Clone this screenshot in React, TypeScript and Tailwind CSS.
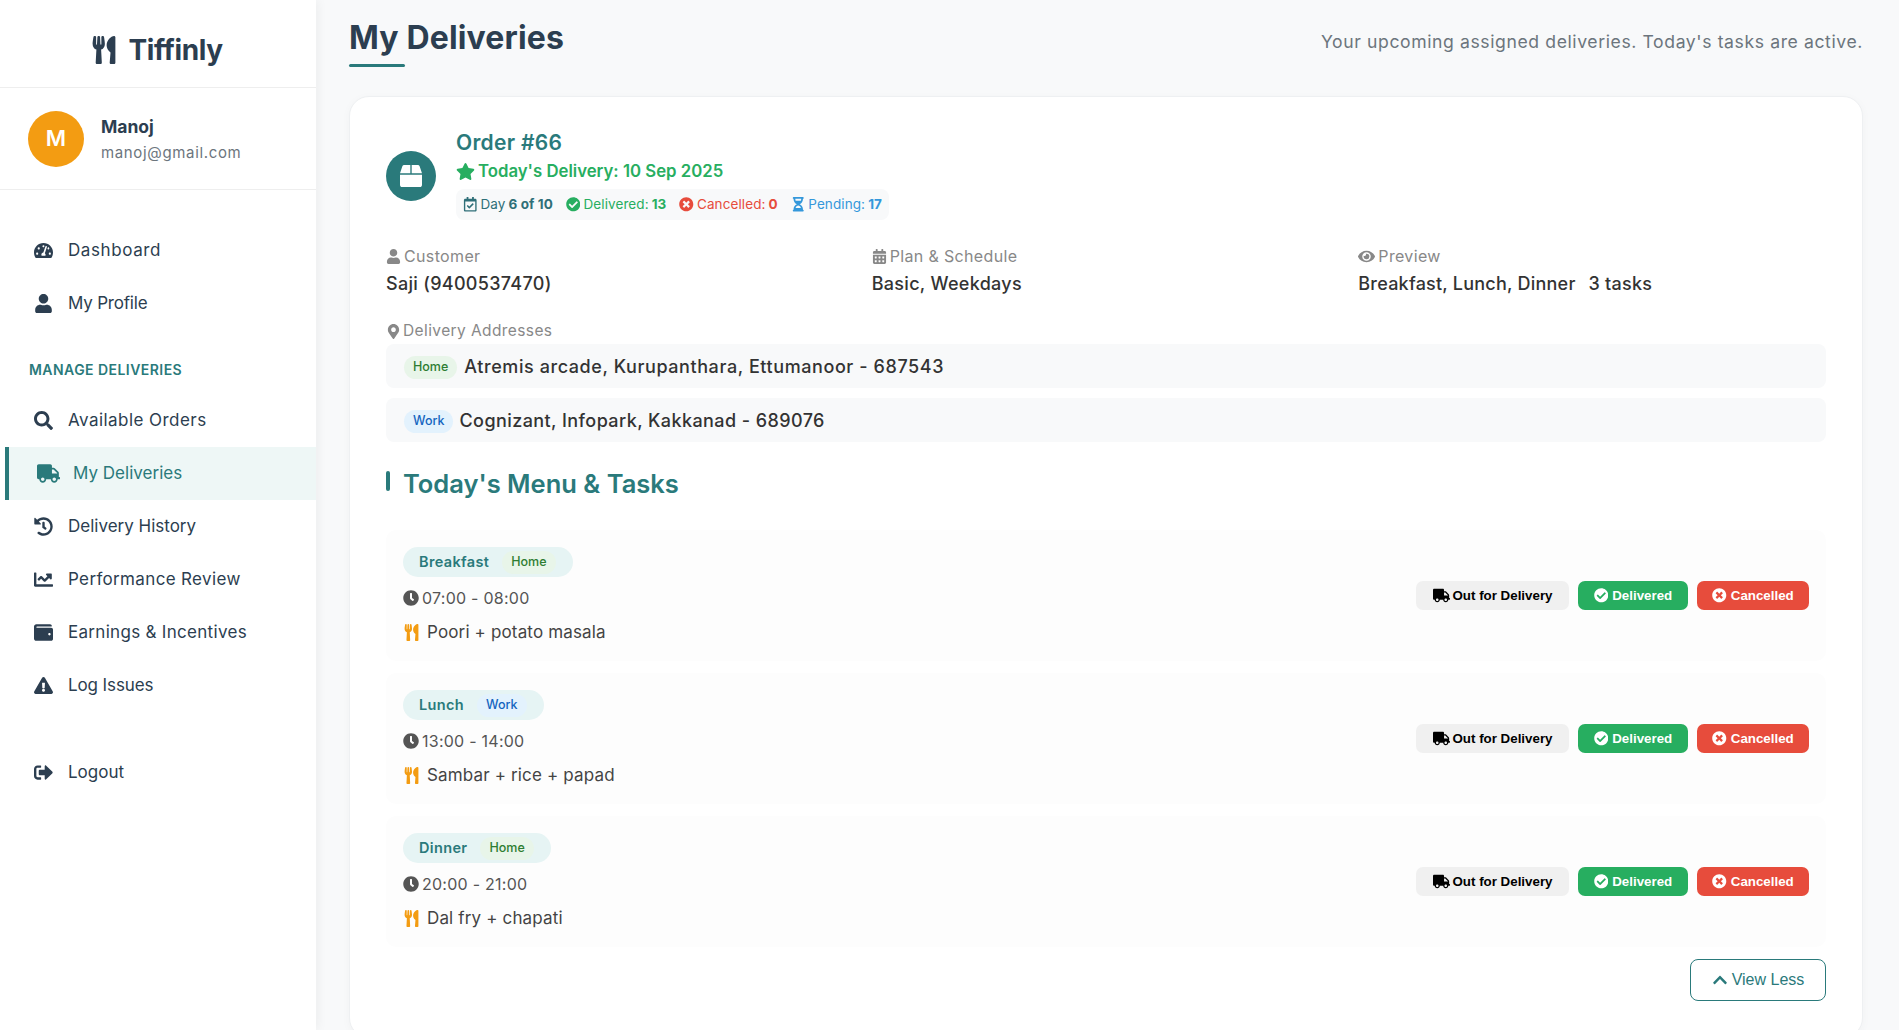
import {
  FaBox,
  FaCalendarAlt,
  FaChartLine,
  FaCheckCircle,
  FaChevronUp,
  FaClock,
  FaExclamationTriangle,
  FaEye,
  FaHistory,
  FaHourglassHalf,
  FaMapMarkerAlt,
  FaRegCalendarCheck,
  FaSearch,
  FaSignOutAlt,
  FaStar,
  FaTachometerAlt,
  FaTimesCircle,
  FaTruck,
  FaUser,
  FaUtensils,
  FaWallet,
} from 'react-icons/fa';

function NavItem({ icon, label, spacing = 'tracking-[0.35px]' }: { icon: React.ReactNode; label: string; spacing?: string }) {
  return (
    <a className="flex h-[53px] items-center gap-[15px] pl-[33px] text-[#2c3e50]">
      <span className="flex w-[20px] justify-center text-[19px]">{icon}</span>
      <span className={`text-[17px] ${spacing}`}>{label}</span>
    </a>
  );
}

function Tag({ kind }: { kind: 'Home' | 'Work' }) {
  const cls = kind === 'Home' ? 'bg-[#e8f5e9] text-[#2e7d32]' : 'bg-[#e3f2fd] text-[#1565c0]';
  return <span className={`inline-flex h-[23px] items-center rounded-full px-[9px] text-[12.5px] font-medium ${cls}`}>{kind}</span>;
}

function Task({ meal, kind, time, menu }: { meal: string; kind: 'Home' | 'Work'; time: string; menu: string }) {
  return (
    <div className="flex h-[131px] items-center justify-between rounded-[10px] bg-[#fdfdfd] pl-[17px] pr-[17px]">
      <div>
        <div className="inline-flex h-[30px] items-center gap-[13px] rounded-[15px] bg-[#e6f4f4] pl-[16px] pr-[17px]">
          <span className="text-[14.5px] font-semibold tracking-[0.35px] text-[#2a7a7b]">{meal}</span>
          <Tag kind={kind} />
        </div>
        <div className="mt-[10px] flex items-center gap-[3px] text-[16px] leading-[22px] tracking-[0.25px] text-[#555]">
          <FaClock className="text-[16px] text-[#555]" />
          {time}
        </div>
        <div className="mt-[11px] flex items-center gap-[7px] text-[17px] leading-[24px] tracking-[0.15px] text-[#444]">
          <FaUtensils className="text-[17px] text-[#f39c12]" />
          {menu}
        </div>
      </div>
      <div className="flex items-center gap-[9px] font-['Liberation_Sans',sans-serif] text-[13.33px] font-bold">
        <button className="flex h-[29px] w-[153px] items-center justify-center gap-[3px] rounded-[7px] bg-[#f0f0f0] text-black">
          <FaTruck className="text-[17px]" />
          Out for Delivery
        </button>
        <button className="flex h-[29px] w-[110px] items-center justify-center gap-[4px] rounded-[7px] bg-[#27ae60] text-white">
          <FaCheckCircle className="text-[14.5px]" />
          Delivered
        </button>
        <button className="flex h-[29px] w-[112px] items-center justify-center gap-[4px] rounded-[7px] bg-[#e74c3c] text-white">
          <FaTimesCircle className="text-[14.5px]" />
          Cancelled
        </button>
      </div>
    </div>
  );
}

export default function App() {
  return (
    <div className="flex h-screen overflow-hidden bg-[#f8f9fa] font-[Inter,sans-serif]">
      {/* Sidebar */}
      <aside className="w-[316px] shrink-0 bg-white shadow-[2px_0_10px_rgba(0,0,0,0.05)]">
        <div className="flex h-[88px] items-center justify-center gap-[10px] border-b border-[#eeeeee] pr-[3px] pt-[12px] text-[#2c3e50]">
          <FaUtensils className="text-[28px]" />
          <span className="text-[28px] font-bold tracking-[-0.4px]">Tiffinly</span>
        </div>
        <div className="flex h-[102px] items-center gap-[17px] border-b border-[#eeeeee] pl-[28px]">
          <div className="flex h-[56px] w-[56px] items-center justify-center rounded-full bg-[#f39c12] text-[22px] font-semibold text-white">M</div>
          <div className="pt-[2px]">
            <div className="text-[17.5px] font-bold leading-[26px] text-[#2c3e50]">Manoj</div>
            <div className="pt-[1px] text-[15px] leading-[24px] tracking-[0.65px] text-[#6c757d]">manoj@gmail.com</div>
          </div>
        </div>
        <nav className="pt-[34px]">
          <NavItem icon={<FaTachometerAlt />} label="Dashboard" spacing="tracking-[0.6px]" />
          <NavItem icon={<FaUser />} label="My Profile" spacing="tracking-[-0.2px]" />
          <div className="h-[64px] pl-[29px] pt-[30px] text-[14px] font-semibold uppercase leading-[20px] tracking-[0.45px] text-[#2a7a7b]">Manage Deliveries</div>
          <NavItem icon={<FaSearch />} label="Available Orders" spacing="tracking-[0.45px]" />
          <a className="ml-[5px] flex h-[53px] items-center gap-[13px] border-l-[4px] border-[#2a7a7b] bg-[#eef7f6] pl-[28px] text-[#2a7a7b]">
            <FaTruck className="text-[23px]" />
            <span className="text-[17px] tracking-[0.02px]">My Deliveries</span>
          </a>
          <NavItem icon={<FaHistory />} label="Delivery History" spacing="tracking-[0px]" />
          <NavItem icon={<FaChartLine />} label="Performance Review" />
          <NavItem icon={<FaWallet />} label="Earnings & Incentives" spacing="tracking-[0.3px]" />
          <NavItem icon={<FaExclamationTriangle />} label="Log Issues" spacing="tracking-[-0.1px]" />
          <div className="h-[34px]" />
          <NavItem icon={<FaSignOutAlt />} label="Logout" spacing="tracking-[0px]" />
        </nav>
      </aside>

      {/* Main */}
      <main className="min-w-0 flex-1 pl-[33px] pr-[36px]">
        <header className="flex h-[96px] items-start justify-between">
          <div className="pt-[18px]">
            <h1 className="text-[32px] font-bold leading-[40px] tracking-[0.15px] text-[#2c3e50]">My Deliveries</h1>
            <div className="mt-[6px] h-[3px] w-[56px] rounded-full bg-[#2a7a7b]" />
          </div>
          <p className="pt-[30px] text-[17.6px] leading-[24px] tracking-[0.6px] text-[#6c757d]">Your upcoming assigned deliveries. Today's tasks are active.</p>
        </header>

        <section className="rounded-[20px] border border-[#eef0f2] bg-white px-[36px] pb-[36px] pt-[34px] shadow-[0_2px_10px_rgba(0,0,0,0.03)]">
          {/* Order header */}
          <div className="flex items-center gap-[20px]">
            <div className="flex h-[50px] w-[50px] items-center justify-center rounded-full bg-[#2a7a7b] text-[22px] text-white">
              <FaBox />
            </div>
            <div>
              <div className="text-[21px] font-semibold leading-[24px] tracking-[0.3px] text-[#2a7a7b]">Order #66</div>
              <div className="mt-[4px] flex items-center gap-[3px] text-[16.75px] font-semibold leading-[24px] text-[#27ae60]">
                <FaStar className="text-[19px]" />
                Today's Delivery: 10 Sep 2025
              </div>
              <div className="mt-[6px] flex h-[31px] items-center gap-[13px] rounded-[8px] bg-[#f8f9fa] px-[7px] text-[13.5px] tracking-[0.1px]">
                <span className="flex items-center gap-[3px] text-[#2f6f78]">
                  <FaRegCalendarCheck className="text-[14.5px]" /> Day <b className="font-bold">6 of 10</b>
                </span>
                <span className="flex items-center gap-[3px] text-[#27ae60]">
                  <FaCheckCircle className="text-[14.5px]" /> Delivered: <b className="font-bold">13</b>
                </span>
                <span className="flex items-center gap-[3px] text-[#e74c3c]">
                  <FaTimesCircle className="text-[14.5px]" /> Cancelled: <b className="font-bold">0</b>
                </span>
                <span className="flex items-center gap-[3px] text-[#3498db]">
                  <FaHourglassHalf className="text-[14.5px]" /> Pending: <b className="font-bold">17</b>
                </span>
              </div>
            </div>
          </div>

          {/* Details */}
          <div className="mt-[25px] grid grid-cols-3 gap-x-[17px]">
            <div>
              <div className="flex items-center gap-[3px] text-[16px] leading-[22px] tracking-[0.35px] text-[#888]"><FaUser className="text-[15px]" /> Customer</div>
              <div className="mt-[4px] text-[18px] font-medium leading-[26px] tracking-[0.3px] text-[#333]">Saji (9400537470)</div>
            </div>
            <div>
              <div className="flex items-center gap-[3px] text-[16px] leading-[22px] tracking-[0.35px] text-[#888]"><FaCalendarAlt className="text-[15px]" /> Plan &amp; Schedule</div>
              <div className="mt-[4px] text-[18px] font-medium leading-[26px] tracking-[0.3px] text-[#333]">Basic, Weekdays</div>
            </div>
            <div className="pl-[1px]">
              <div className="flex items-center gap-[3px] text-[16px] leading-[22px] tracking-[0.35px] text-[#888]"><FaEye className="text-[17px]" /> Preview</div>
              <div className="mt-[4px] flex gap-[13px] text-[18px] font-medium leading-[26px] tracking-[0.22px] text-[#333]">
                <span>Breakfast, Lunch, Dinner</span>
                <span>3 tasks</span>
              </div>
            </div>
          </div>

          {/* Addresses */}
          <div className="mt-[24px] flex items-center gap-[2px] text-[15.5px] leading-[20px] tracking-[0.4px] text-[#888]"><FaMapMarkerAlt className="text-[15px]" /> Delivery Addresses</div>
          <div className="mt-[3px] flex flex-col gap-[10px]">
            <div className="flex h-[44px] items-center gap-[7px] rounded-[8px] bg-[#f8f9fa] pl-[18px] text-[18px] font-medium tracking-[0.58px] text-[#333]">
              <span className="mt-[3px] flex tracking-normal"><Tag kind="Home" /></span>
              Atremis arcade, Kurupanthara, Ettumanoor - 687543
            </div>
            <div className="flex h-[44px] items-center gap-[6px] rounded-[8px] bg-[#f8f9fa] pl-[18px] text-[18px] font-medium tracking-[0.42px] text-[#333]">
              <span className="mt-[3px] flex tracking-normal"><Tag kind="Work" /></span>
              Cognizant, Infopark, Kakkanad - 689076
            </div>
          </div>

          {/* Tasks */}
          <div className="mt-[24px] flex items-start gap-[13px]">
            <div className="mt-[5px] h-[20px] w-[4px] rounded-full bg-[#2a7a7b]" />
            <h2 className="text-[25.5px] font-semibold leading-[36px] text-[#2a7a7b]">Today's Menu &amp; Tasks</h2>
          </div>
          <div className="mt-[28px] flex flex-col gap-[12px]">
            <Task meal="Breakfast" kind="Home" time="07:00 - 08:00" menu="Poori + potato masala" />
            <Task meal="Lunch" kind="Work" time="13:00 - 14:00" menu="Sambar + rice + papad" />
            <Task meal="Dinner" kind="Home" time="20:00 - 21:00" menu="Dal fry + chapati" />
          </div>
          <div className="mt-[12px] flex justify-end">
            <button className="flex h-[42px] w-[136px] items-center justify-center gap-[4px] rounded-[8px] border border-[#2a7a7b] font-['Liberation_Sans',sans-serif] text-[16px] text-[#2a7a7b]">
              <FaChevronUp className="text-[16px]" />
              View Less
            </button>
          </div>
        </section>
      </main>
    </div>
  );
}
